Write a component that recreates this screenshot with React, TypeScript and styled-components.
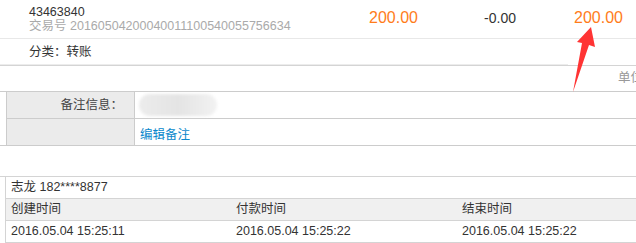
import React from "react"
import styled, {createGlobalStyle} from "styled-components";

const GlobalStyle = createGlobalStyle`
    html, body{
        margin: 0;
        padding: 0;
        background: #fff;
    }
    body{
        font-family: "Liberation Sans", "Noto Sans CJK SC", sans-serif;
        font-size: 12.5px;
        color: #333;
    }
`

interface Times {
    created: string;
    paid: string;
    finished: string;
}

const order = {
    id: "43463840",
    tradeNo: "20160504200040011100540055756634",
    category: "转账",
    amount: "200.00",
    discount: "-0.00",
    total: "200.00",
    buyer: "志龙 182****8877",
}

const times: Times = {
    created: "2016.05.04 15:25:11",
    paid: "2016.05.04 15:25:22",
    finished: "2016.05.04 15:25:22",
}

const Arrow = () => (
    <ArrowSvg width="636" height="243" viewBox="0 0 636 243">
        <polygon points="591,27 595,47 589,45 573,92 582,43 577,42" fill="#ff3434" />
    </ArrowSvg>
)

const App = () => {
    return (
        <Page>
            <GlobalStyle />
            <TopRow>
                <Info>
                    <span>{order.id}</span>
                    <TradeNo>交易号 {order.tradeNo}</TradeNo>
                </Info>
                <Amount highlight>{order.amount}</Amount>
                <Amount>{order.discount}</Amount>
                <Amount highlight>{order.total}</Amount>
            </TopRow>
            <CategoryRow>
                <div className="inner">分类：{order.category}</div>
            </CategoryRow>
            <UnitBar>单位</UnitBar>

            <NoteWrap>
                <NoteTable>
                    <Label>备注信息：</Label>
                    <Value><Blur /></Value>
                    <Label last></Label>
                    <Value last><EditLink href="#">编辑备注</EditLink></Value>
                </NoteTable>
            </NoteWrap>

            <BuyerWrap>
                <BuyerTable>
                    <BuyerRow>{order.buyer}</BuyerRow>
                    <TimeGrid head>
                        <span>创建时间</span>
                        <span>付款时间</span>
                        <span>结束时间</span>
                    </TimeGrid>
                    <TimeGrid>
                        <span>{times.created}</span>
                        <span>{times.paid}</span>
                        <span>{times.finished}</span>
                    </TimeGrid>
                </BuyerTable>
            </BuyerWrap>
            <Arrow />
        </Page>
    );
}

const Page = styled.div`
    position: relative;
    width: 636px;
    height: 243px;
    overflow: hidden;
`

const TopRow = styled.div`
    display: grid;
    grid-template-columns: 1fr 98px 98px 107px;
    align-items: center;
    height: 38px;
    padding: 0 13px 0 29px;
    border-bottom: 1px solid #e8e8e8;
`

const Info = styled.div`
    display: flex;
    flex-direction: column;
    line-height: 14px;
    span{
        white-space: nowrap;
    }
`

const TradeNo = styled.span`
    color: #aaa;
`

const Amount = styled.div<{highlight?: boolean}>`
    text-align: right;
    font-size: ${p => p.highlight ? "16px" : "14px"};
    color: ${p => p.highlight ? "#ff7c1a" : "#333"};
    margin-top: -2px;
`

const CategoryRow = styled.div`
    height: 26px;
    .inner{
        width: 539px;
        height: 25px;
        line-height: 26px;
        padding-left: 29px;
        border-bottom: 1px solid #ececec;
    }
`

const UnitBar = styled.div`
    height: 25px;
    line-height: 25px;
    padding-left: 618px;
    border-top: 1px solid #d4d4d4;
    border-bottom: 1px solid #ccc;
    color: #999;
    white-space: nowrap;
    overflow: hidden;
`

const NoteWrap = styled.div`
    border-bottom: 1px solid #ccc;
    padding-left: 6px;
`

const NoteTable = styled.div`
    display: grid;
    grid-template-columns: 128px 1fr;
    border-left: 1px solid #ccc;
`

const Label = styled.div<{last?: boolean}>`
    height: 26px;
    line-height: 26px;
    background: #ebebeb;
    text-align: right;
    padding-right: 11px;
    border-right: 1px solid #ccc;
    border-bottom: ${p => p.last ? "none" : "1px solid #ccc"};
    color: #444;
`

const Value = styled.div<{last?: boolean}>`
    height: 26px;
    display: flex;
    align-items: center;
    padding-left: 4px;
    border-bottom: ${p => p.last ? "none" : "1px solid #ccc"};
`

const Blur = styled.div`
    width: 78px;
    height: 22px;
    border-radius: 11px;
    background: linear-gradient(90deg, #ececec 0%, #e4e4e4 50%, #f2f2f2 100%);
    filter: blur(1.5px);
`

const EditLink = styled.a`
    color: #0a88cc;
    text-decoration: none;
    padding-left: 1px;
    margin-top: 2px;
`

const BuyerWrap = styled.div`
    margin-top: 30px;
    border-top: 1px solid #d4d4d4;
    padding-left: 5px;
`

const BuyerTable = styled.div`
    border-left: 1px solid #d4d4d4;
`

const BuyerRow = styled.div`
    height: 21px;
    line-height: 21px;
    padding-left: 5px;
    border-bottom: 1px solid #d4d4d4;
`

const TimeGrid = styled.div<{head?: boolean}>`
    display: grid;
    grid-template-columns: 225px 226px 1fr;
    height: 21px;
    line-height: 21px;
    background: ${p => p.head ? "#f0f0f0" : "#fff"};
    border-bottom: 1px solid #d4d4d4;
    span{
        padding-left: 5px;
        white-space: nowrap;
    }
`

const ArrowSvg = styled.svg`
    position: absolute;
    left: 0;
    top: 0;
    pointer-events: none;
`

export default App;
